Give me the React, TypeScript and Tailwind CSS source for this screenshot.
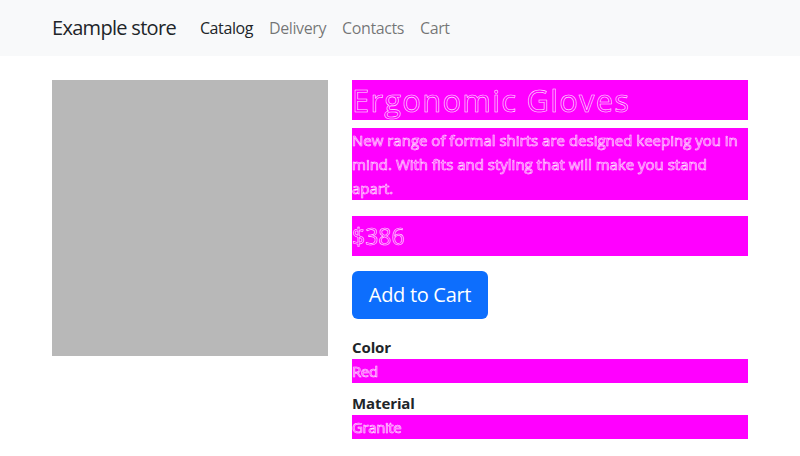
import React from "react";

const ghost =
  "text-[#ff00ff] bg-[#ff00ff] [-webkit-text-stroke:0.6px_rgba(255,255,255,0.9)]";

export default function App() {
  return (
    <div className="min-h-[456px] bg-white text-[#212529] font-['Open_Sans',sans-serif]">
      <nav className="bg-[#f8f9fa] h-14 flex items-center">
        <div className="w-[720px] mx-auto px-3 flex items-center">
          <span className="text-[20px] leading-[30px] mr-4 text-[#212529] tracking-[-0.7px]">Example store</span>
          <ul className="flex text-[16px] leading-6">
            <li className="px-2 py-2 text-[#212529] tracking-[-0.4px]">Catalog</li>
            <li className="px-2 py-2 text-[rgba(0,0,0,0.55)] tracking-[-0.4px]">Delivery</li>
            <li className="px-2 py-2 text-[rgba(0,0,0,0.55)] tracking-[-0.4px]">Contacts</li>
            <li className="px-2 py-2 text-[rgba(0,0,0,0.55)] tracking-[-0.4px]">Cart</li>
          </ul>
        </div>
      </nav>
      <main className="w-[720px] mx-auto px-3 pt-6">
        <div className="flex gap-6">
          <div className="w-[276px] h-[276px] bg-[#b8b8b8] shrink-0" />
          <div className="flex-1 flex flex-col">
            <h1 className={`${ghost} text-[31px] leading-10 h-10 tracking-[1.2px]`}>Ergonomic Gloves</h1>
            <p className={`${ghost} mt-2 text-[15px] leading-6 tracking-[0px]`}>
              New range of formal shirts are designed keeping you in mind. With fits and styling that will make you stand apart.
            </p>
            <div className={`${ghost} mt-4 text-[23px] leading-10 h-10`}>$386</div>
            <div className="mt-[15px]">
              <button className="bg-[#0d6efd] text-white text-[20px] leading-[30px] px-4 py-[9px] rounded-md w-[136px] h-12 tracking-[-0.3px]">
                Add to Cart
              </button>
            </div>
            <div className="mt-4 font-bold text-[15px] leading-6 tracking-[-0.1px]">Color</div>
            <div className={`${ghost} text-[15px] leading-6 h-6 tracking-[-0.4px]`}>Red</div>
            <div className="mt-2 font-bold text-[15px] leading-6 tracking-[-0.1px]">Material</div>
            <div className={`${ghost} text-[15px] leading-6 h-6 tracking-[-0.4px]`}>Granite</div>
          </div>
        </div>
      </main>
    </div>
  );
}
